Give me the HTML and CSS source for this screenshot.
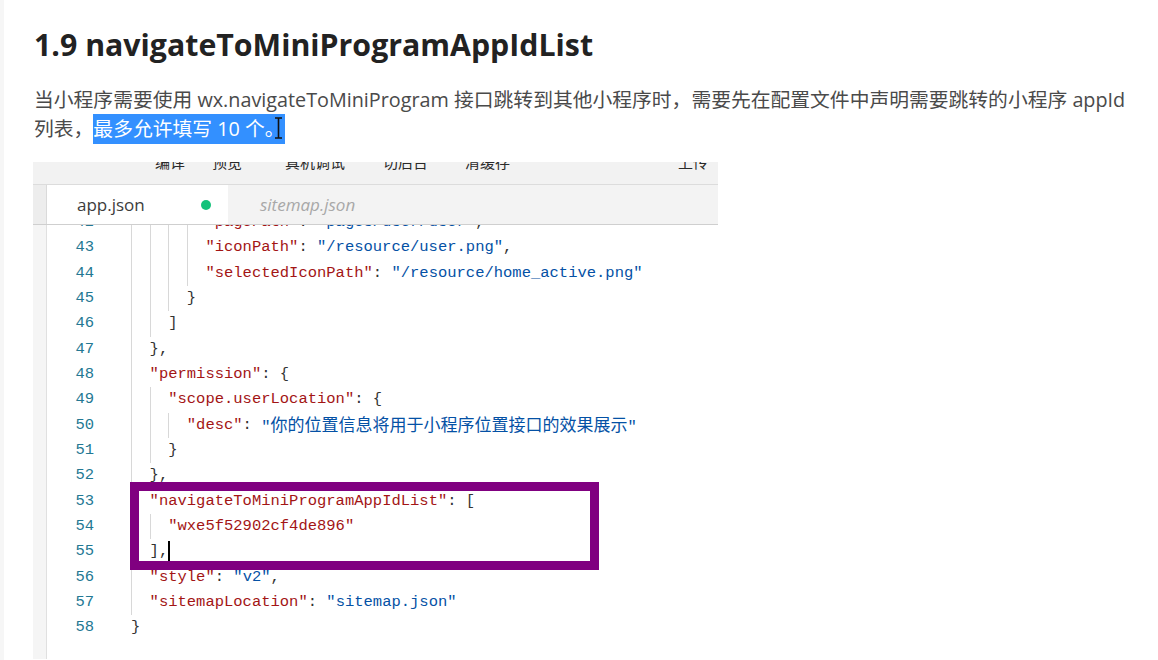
FILE: index.html
```html
<!DOCTYPE html>
<html lang="zh-CN">
<head>
<meta charset="utf-8">
<title>navigateToMiniProgramAppIdList</title>
<link rel="stylesheet" href="styles.css">
</head>
<body>
<div class="page">
  <h1 class="title">1.9 navigateToMiniProgramAppIdList</h1>
  <p class="desc">当小程序需要使用 wx.navigateToMiniProgram 接口跳转到其他小程序时，需要先在配置文件中声明需要跳转的小程序 appId 列表，<span class="sel">最多允许填写 10 个。<svg class="ibeam" width="9" height="22" viewBox="0 0 9 22"><path d="M1 1h7M1 21h7M4.5 1v20" stroke="#111" stroke-width="1.6" fill="none"/></svg></span></p>

  <div class="shot">
    <div class="toolbar">
      <span class="tb t1">编译</span>
      <span class="tb t2">预览</span>
      <span class="tb t3">真机调试</span>
      <span class="tb t4">切后台</span>
      <span class="tb t5">清缓存</span>
      <span class="tb t6">上传</span>
    </div>
    <div class="tabs">
      <div class="gut"></div>
      <div class="tab active"><span class="tabname">app.json</span><span class="dot"></span></div>
      <div class="tab"><span class="tabname it">sitemap.json</span></div>
    </div>
    <div class="editor">
      <div class="gut"></div>
      <div class="code">
        <div class="row"><span class="ln">42</span><span class="src"><i class="ind"></i><i class="ind"></i><i class="ind"></i><i class="ind"></i><span class="k">"pagePath"</span><span class="p">: </span><span class="s">"pages/user/user"</span><span class="p">,</span></span></div>
        <div class="row"><span class="ln">43</span><span class="src"><i class="ind"></i><i class="ind"></i><i class="ind"></i><i class="ind"></i><span class="k">"iconPath"</span><span class="p">: </span><span class="s">"/resource/user.png"</span><span class="p">,</span></span></div>
        <div class="row"><span class="ln">44</span><span class="src"><i class="ind"></i><i class="ind"></i><i class="ind"></i><i class="ind"></i><span class="k">"selectedIconPath"</span><span class="p">: </span><span class="s">"/resource/home_active.png"</span></span></div>
        <div class="row"><span class="ln">45</span><span class="src"><i class="ind"></i><i class="ind"></i><i class="ind"></i><span class="p">}</span></span></div>
        <div class="row"><span class="ln">46</span><span class="src"><i class="ind"></i><i class="ind"></i><span class="p">]</span></span></div>
        <div class="row"><span class="ln">47</span><span class="src"><i class="ind"></i><span class="p">},</span></span></div>
        <div class="row"><span class="ln">48</span><span class="src"><i class="ind"></i><span class="k">"permission"</span><span class="p">: {</span></span></div>
        <div class="row"><span class="ln">49</span><span class="src"><i class="ind"></i><i class="ind"></i><span class="k">"scope.userLocation"</span><span class="p">: {</span></span></div>
        <div class="row"><span class="ln">50</span><span class="src"><i class="ind"></i><i class="ind"></i><i class="ind"></i><span class="k">"desc"</span><span class="p">: </span><span class="s">"<span class="cjk">你的位置信息将用于小程序位置接口的效果展示</span>"</span></span></div>
        <div class="row"><span class="ln">51</span><span class="src"><i class="ind"></i><i class="ind"></i><span class="p">}</span></span></div>
        <div class="row"><span class="ln">52</span><span class="src"><i class="ind"></i><span class="p">},</span></span></div>
        <div class="row"><span class="ln">53</span><span class="src"><i class="ind"></i><span class="k">"navigateToMiniProgramAppIdList"</span><span class="p">: [</span></span></div>
        <div class="row"><span class="ln">54</span><span class="src"><i class="ind"></i><i class="ind"></i><span class="k">"wxe5f52902cf4de896"</span></span></div>
        <div class="row"><span class="ln">55</span><span class="src"><i class="ind"></i><span class="p">],</span><span class="caret"></span></span></div>
        <div class="row"><span class="ln">56</span><span class="src"><i class="ind"></i><span class="k">"style"</span><span class="p">: </span><span class="s">"v2"</span><span class="p">,</span></span></div>
        <div class="row"><span class="ln">57</span><span class="src"><i class="ind"></i><span class="k">"sitemapLocation"</span><span class="p">: </span><span class="s">"sitemap.json"</span></span></div>
        <div class="row"><span class="ln">58</span><span class="src"><span class="p">}</span></span></div>
      </div>
      <div class="mark"></div>
    </div>
  </div>
</div>
</body>
</html>
```

FILE: styles.css
```css
html, body {
  margin: 0;
  padding: 0;
  background: #fff;
  overflow: hidden;
}
body {
  border-left: 4px solid #f6f6f6;
  height: 660px;
  box-sizing: border-box;
}
.page {
  padding-left: 30px;
  font-family: "Open Sans", "Noto Sans CJK SC", sans-serif;
}
.title {
  margin: 0;
  padding-top: 26px;
  font-size: 30.3px;
  line-height: 38px;
  font-weight: 700;
  color: #222;
}
.desc {
  margin: 21px 0 0 0;
  font-size: 19.8px;
  line-height: 29px;
  color: #4a4a4a;
  width: 1110px;
}
.sel {
  position: relative;
  background: #3390ff;
  color: #fff;
  padding: 1px 0 2px;
}
.ibeam {
  position: absolute;
  right: 2px;
  top: 3px;
}
.shot {
  margin-top: 19px;
  margin-left: -1px;
  width: 685px;
  height: 497px;
  position: relative;
  overflow: hidden;
}
.toolbar {
  height: 23px;
  background: #f2f2f2;
  border-bottom: 1px solid #dcdcdc;
  display: flex;
  overflow: hidden;
  font-family: "Noto Sans CJK SC", sans-serif;
  font-size: 15px;
  color: #2a2a2a;
  box-sizing: border-box;
}
.tb {
  line-height: 20px;
  margin-top: -10px;
  height: 20px;
}
.t1 { margin-left: 122px; }
.t2 { margin-left: 27px; }
.t3 { margin-left: 43px; }
.t4 { margin-left: 38px; }
.t5 { margin-left: 37px; }
.t6 { margin-left: 168px; }
.tabs {
  display: flex;
  height: 40px;
  background: #f3f3f3;
  border-bottom: 1px solid #cfcfcf;
  box-sizing: border-box;
}
.gut {
  width: 13px;
  flex: none;
  background: #ededed;
  border-right: 1px solid #dadada;
}
.tab {
  width: 181px;
  display: flex;
  align-items: center;
  padding-left: 30px;
  box-sizing: border-box;
}
.tab.active {
  background: #fff;
}
.tabname {
  font-family: "Open Sans", sans-serif;
  font-size: 17px;
  color: #3c3c3c;
}
.tabname.it {
  font-style: italic;
  color: #a8a8a8;
  padding-left: 2px;
}
.dot {
  width: 10px;
  height: 10px;
  border-radius: 50%;
  background: #14c27a;
  margin-left: 56px;
}
.editor {
  display: flex;
  height: 434px;
  overflow: hidden;
  position: relative;
}
.editor .gut {
  background: #f5f5f5;
  border-right: 1px solid #e0e0e0;
}
.code {
  margin-top: -15px;
  font-family: "Liberation Mono", monospace;
  font-size: 15.5px;
}
.row {
  display: flex;
  height: 25.33px;
  line-height: 25.33px;
  white-space: pre;
}
.ln {
  width: 47px;
  text-align: right;
  color: #237893;
  flex: none;
}
.src {
  margin-left: 37px;
  display: flex;
  align-items: center;
}
.ind {
  display: inline-block;
  width: 18.6px;
  height: 25.33px;
  border-left: 1px solid #d8d8d8;
  box-sizing: border-box;
  flex: none;
}
.k { color: #a31515; }
.s { color: #0451a5; }
.p { color: #333; }
.cjk {
  font-family: "Noto Sans CJK SC", sans-serif;
  font-size: 17px;
}
.caret {
  width: 2px;
  height: 21px;
  background: #000;
  display: inline-block;
}
.mark {
  position: absolute;
  left: 97px;
  top: 257px;
  width: 469px;
  height: 88px;
  border: 9px solid #800080;
  box-sizing: border-box;
}
```
